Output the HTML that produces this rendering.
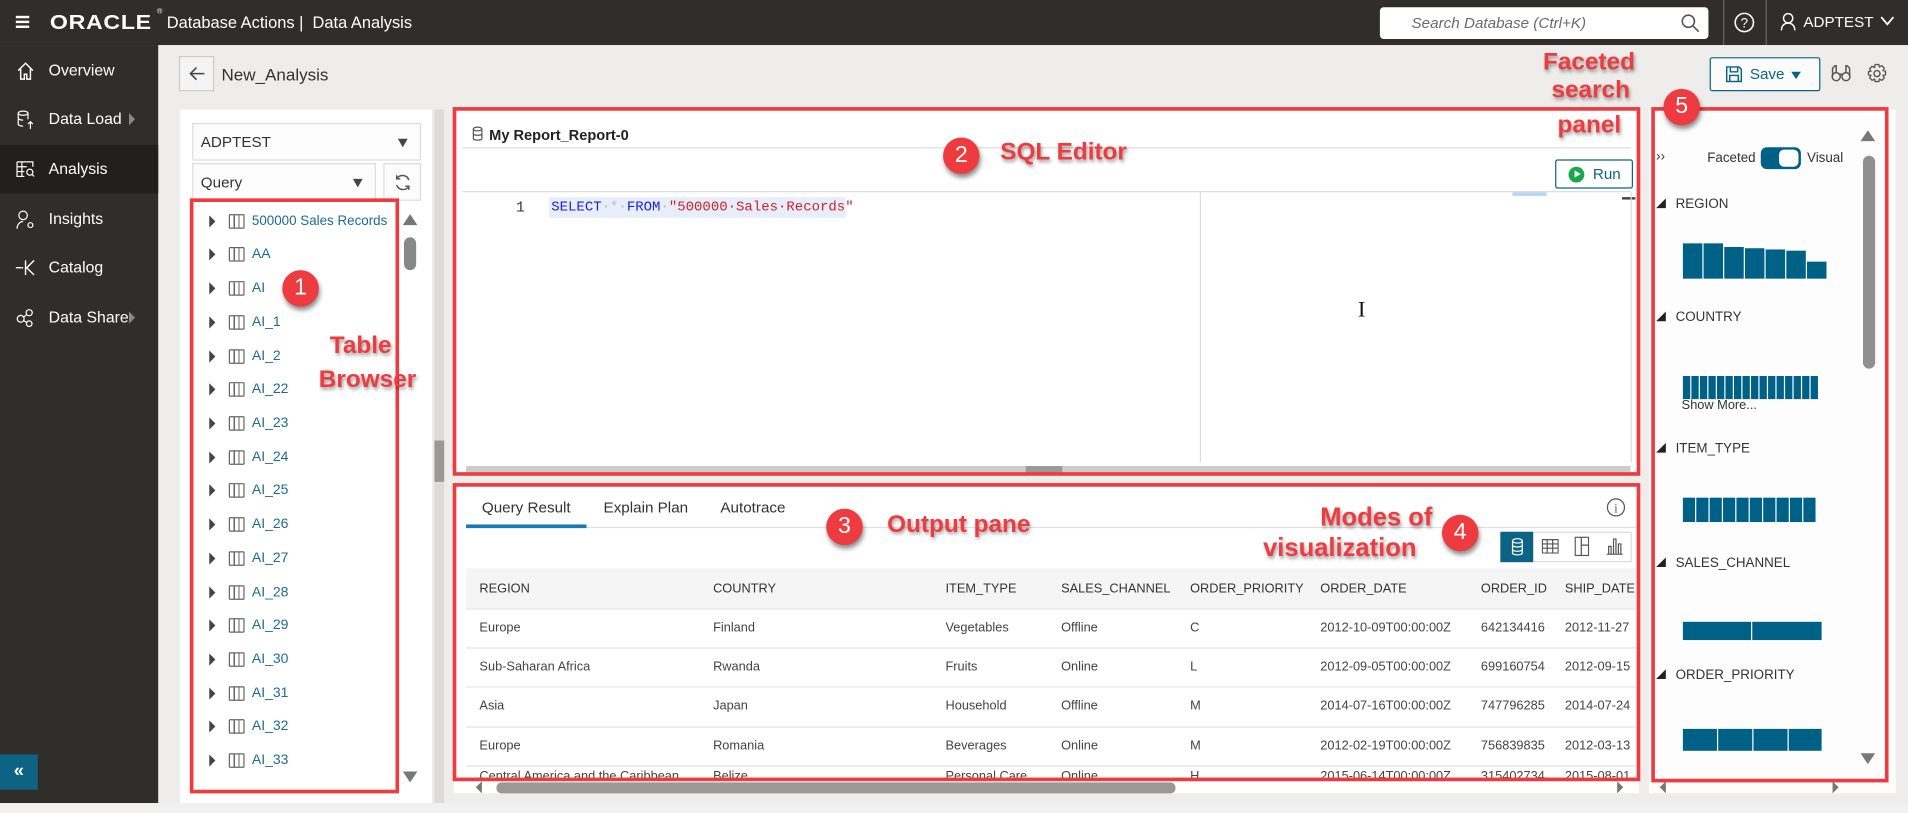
<!DOCTYPE html>
<html><head><meta charset="utf-8">
<style>
*{box-sizing:border-box;margin:0;padding:0}
html,body{width:1908px;height:813px;overflow:hidden;background:#f1f1f1;font-family:"Liberation Sans",Arial,sans-serif}
#w{position:absolute;left:0;top:0;width:1568px;height:668px;transform:scale(1.21684);transform-origin:0 0;background:#eeedeb}
.a{position:absolute}
.top{left:0;top:0;width:1568px;height:37px;background:#312d2a;color:#fff}
.nav{left:0;top:37px;width:130px;height:623px;background:#312d2a}
.nav .it{position:absolute;left:0;width:130px;height:40px;color:#fff;font-size:13px;line-height:40px;padding-left:40px}
.nav svg{position:absolute;left:13px;top:12px}
.panel{background:#fff}
.tr{position:absolute;left:172px;font-size:11.5px;color:#1d6a96;height:16px;line-height:16px}
.tr:before{content:"";position:absolute;left:0;top:3px;border-left:5px solid #444;border-top:5px solid transparent;border-bottom:5px solid transparent}
.tr i{position:absolute;left:16px;top:2px;width:13px;height:12px;border:1px solid #666;border-radius:1px;background:linear-gradient(90deg,transparent 3px,#666 3px,#666 4px,transparent 4px,transparent 7px,#666 7px,#666 8px,transparent 8px)}
.tr span{margin-left:35px}
.red{position:absolute;border:3px solid #ee3b3f}
.num{position:absolute;width:30px;height:30px;border-radius:50%;background:#ee3b3f;color:#fff;font-size:19px;text-align:center;line-height:30px;box-shadow:1px 3px 4px rgba(0,0,0,.45)}
.lab{position:absolute;color:#ee3b3f;font-weight:bold;font-size:20px;text-shadow:1px 2px 3px rgba(0,0,0,.4);white-space:nowrap}
.th{position:absolute;top:478px;font-size:10.5px;color:#333}
.td{position:absolute;font-size:10.5px;color:#444}
.rl{position:absolute;left:383px;width:962px;height:1px;background:#e3e3e3}
.fl{position:absolute;left:1377px;font-size:11px;color:#333}
.fl:before{content:"";position:absolute;left:-16px;top:1px;border-right:8px solid #222;border-top:8px solid transparent}
.bars{position:absolute;left:1383px;display:flex;align-items:flex-end;gap:1px}
.bars b{background:#006186;display:block}
</style></head><body><div id="w">
<div class="a top">
 <div class="a" style="left:13px;top:13px;width:11px;height:2px;background:#fff;box-shadow:0 4px #fff,0 8px #fff"></div>
 <div class="a" style="left:41px;top:9px;font-size:17px;font-weight:bold;letter-spacing:0.5px;transform:scaleX(1.12);transform-origin:0 0">ORACLE</div>
 <div class="a" style="left:129px;top:7px;font-size:6px">®</div>
 <div class="a" style="left:137px;top:11px;font-size:13.5px">Database Actions |&nbsp; Data Analysis</div>
 <div class="a" style="left:1134px;top:6px;width:270px;height:26px;background:#fff;border-radius:3px">
  <div class="a" style="left:26px;top:6px;font-size:12.5px;font-style:italic;color:#6b6b6b">Search Database (Ctrl+K)</div>
  <svg class="a" style="left:247px;top:5px" width="16" height="16" viewBox="0 0 16 16"><circle cx="6.5" cy="6.5" r="5" fill="none" stroke="#555" stroke-width="1.3"/><path d="M10 10l5 5" stroke="#555" stroke-width="1.3"/></svg>
 </div>
 <div class="a" style="left:1416px;top:0;width:1px;height:37px;background:#666"></div>
 <svg class="a" style="left:1425px;top:10px" width="17" height="17" viewBox="0 0 17 17"><circle cx="8.5" cy="8.5" r="7.5" fill="none" stroke="#fff" stroke-width="1.3"/><text x="8.5" y="12.5" font-size="11" fill="#fff" text-anchor="middle" font-family="Liberation Sans">?</text></svg>
 <div class="a" style="left:1451px;top:0;width:1px;height:37px;background:#666"></div>
 <svg class="a" style="left:1463px;top:10px" width="13" height="16" viewBox="0 0 13 16"><circle cx="6.5" cy="5" r="3.8" fill="none" stroke="#fff" stroke-width="1.2"/><path d="M1 15c0-4 2.5-6 5.5-6s5.5 2 5.5 6" fill="none" stroke="#fff" stroke-width="1.2"/></svg>
 <div class="a" style="left:1482px;top:11px;font-size:12.5px">ADPTEST</div>
 <svg class="a" style="left:1545px;top:13px" width="12" height="9" viewBox="0 0 12 9"><path d="M1 1l5 6 5-6" fill="none" stroke="#fff" stroke-width="1.5"/></svg>
</div>
<div class="a nav">
 <div class="it" style="top:1px"><svg width="16" height="16" viewBox="0 0 16 16"><path d="M2 8L8 2l6 6M4 6.5V15h3v-4h2v4h3V6.5" fill="none" stroke="#fff" stroke-width="1.2"/></svg>Overview</div>
 <div class="it" style="top:41px"><svg width="16" height="16" viewBox="0 0 16 16"><ellipse cx="6" cy="3" rx="4" ry="1.7" fill="none" stroke="#fff"/><path d="M2 3v9c0 1 2 1.7 4 1.7M10 3v5M2 7c0 1 2 1.7 4 1.7M12 10v6M10 12l2-2 2 2" fill="none" stroke="#fff"/></svg>Data Load<span style="position:absolute;left:106px;top:15px;border-left:5px solid #888;border-top:5px solid transparent;border-bottom:5px solid transparent"></span></div>
 <div class="it" style="top:82px;background:#221f1d"><svg width="16" height="16" viewBox="0 0 16 16"><path d="M1 2h13v4M1 2v12h6M1 6h8M1 10h6M5 2v12" fill="none" stroke="#fff"/><circle cx="11.5" cy="10.5" r="2.5" fill="none" stroke="#fff"/><path d="M13.3 12.3L15 14" stroke="#fff"/></svg>Analysis</div>
 <div class="it" style="top:123px"><svg width="16" height="17" viewBox="0 0 16 17"><circle cx="6" cy="5" r="3.5" fill="none" stroke="#fff"/><path d="M1 16c0-3 2-6 5-6" fill="none" stroke="#fff"/><circle cx="12" cy="13" r="2" fill="none" stroke="#fff"/></svg>Insights</div>
 <div class="it" style="top:163px"><svg width="16" height="16" viewBox="0 0 16 16"><path d="M0 8h6M8 2v12M15 2L9 8l6 6" fill="none" stroke="#fff" stroke-width="1.2"/></svg>Catalog</div>
 <div class="it" style="top:204px"><svg width="16" height="16" viewBox="0 0 16 16"><circle cx="4" cy="9" r="2.8" fill="none" stroke="#fff"/><circle cx="11" cy="4" r="2.5" fill="none" stroke="#fff"/><circle cx="11" cy="13" r="2.3" fill="none" stroke="#fff"/><path d="M6.5 7.5l2.5-2M6.5 10.5l2.5 1.5" stroke="#fff"/></svg>Data Share<span style="position:absolute;left:106px;top:15px;border-left:5px solid #888;border-top:5px solid transparent;border-bottom:5px solid transparent"></span></div>
 <div class="a" style="left:0;top:583px;width:31px;height:29px;background:#0d6384;color:#fff;font-size:15px;text-align:center;line-height:27px;font-weight:bold">«</div>
</div>
<div class="a" style="left:0;top:660px;width:1568px;height:8px;background:#f1f1f1"></div>
<div class="a" style="left:147px;top:46px;width:29px;height:29px;border:1px solid #ccc;background:#f4f4f4"><svg style="position:absolute;left:7px;top:7px" width="14" height="13" viewBox="0 0 14 13"><path d="M13 6.5H1.5M6.5 1.5l-5 5 5 5" fill="none" stroke="#444" stroke-width="1.3"/></svg></div>
<div class="a" style="left:182px;top:53px;font-size:14px;color:#333">New_Analysis</div>
<div class="a" style="left:1405px;top:47px;width:91px;height:28px;border:1px solid #0d6384;background:#fbfbfb;border-radius:2px">
 <svg class="a" style="left:12px;top:6px" width="14" height="14" viewBox="0 0 14 14"><path d="M1 1h10l2 2v10H1z M4 1v4h6V1 M3.5 13V8h7v5" fill="none" stroke="#0d6384" stroke-width="1.2"/></svg>
 <div class="a" style="left:32px;top:6px;font-size:12.5px;color:#0d6384">Save</div>
 <div class="a" style="left:66px;top:11px;border-top:6px solid #0d6384;border-left:4px solid transparent;border-right:4px solid transparent"></div>
</div>
<svg class="a" style="left:1505px;top:53px" width="16" height="15" viewBox="0 0 16 15"><circle cx="4" cy="10" r="3.3" fill="none" stroke="#555" stroke-width="1.2"/><circle cx="12" cy="10" r="3.3" fill="none" stroke="#555" stroke-width="1.2"/><path d="M1 10V3l2-2h1v6M15 10V3l-2-2h-1v6M7 8h2" fill="none" stroke="#555" stroke-width="1.2"/></svg>
<svg class="a" style="left:1534px;top:52px" width="17" height="17" viewBox="0 0 17 17"><circle cx="8.5" cy="8.5" r="2.5" fill="none" stroke="#555" stroke-width="1.2"/><path d="M7 1h3l.5 2 2-1 2 2-1 2 2 .5v3l-2 .5 1 2-2 2-2-1-.5 2H7l-.5-2-2 1-2-2 1-2-2-.5V7l2-.5-1-2 2-2 2 1z" fill="none" stroke="#555" stroke-width="1.1"/></svg>
<div class="a panel" style="left:148px;top:90px;width:207px;height:570px"></div>
<div class="a" style="left:158px;top:101px;width:188px;height:31px;border:1px solid #ddd;background:#fcfcfc;font-size:12.5px;color:#333;padding:8px 0 0 6px">ADPTEST<span style="position:absolute;left:168px;top:12px;border-top:7px solid #444;border-left:4px solid transparent;border-right:4px solid transparent"></span></div>
<div class="a" style="left:158px;top:134px;width:151px;height:31px;border:1px solid #ddd;background:#fcfcfc;font-size:12.5px;color:#333;padding:8px 0 0 6px">Query<span style="position:absolute;left:131px;top:12px;border-top:7px solid #444;border-left:4px solid transparent;border-right:4px solid transparent"></span></div>
<div class="a" style="left:315px;top:134px;width:31px;height:31px;border:1px solid #ddd;background:#fcfcfc"><svg style="position:absolute;left:7px;top:7px" width="16" height="16" viewBox="0 0 16 16"><path d="M13 6A5.5 5.5 0 0 0 3 5M3 10a5.5 5.5 0 0 0 10 1M3 2v3h3M13 14v-3h-3" fill="none" stroke="#555" stroke-width="1.2"/></svg></div>
<div class="tr" style="top:174px;font-size:11px"><i></i><span>500000 Sales Records</span></div>
<div class="tr" style="top:201px"><i></i><span>AA</span></div>
<div class="tr" style="top:229px"><i></i><span>AI</span></div>
<div class="tr" style="top:257px"><i></i><span>AI_1</span></div>
<div class="tr" style="top:285px"><i></i><span>AI_2</span></div>
<div class="tr" style="top:312px"><i></i><span>AI_22</span></div>
<div class="tr" style="top:340px"><i></i><span>AI_23</span></div>
<div class="tr" style="top:368px"><i></i><span>AI_24</span></div>
<div class="tr" style="top:395px"><i></i><span>AI_25</span></div>
<div class="tr" style="top:423px"><i></i><span>AI_26</span></div>
<div class="tr" style="top:451px"><i></i><span>AI_27</span></div>
<div class="tr" style="top:479px"><i></i><span>AI_28</span></div>
<div class="tr" style="top:506px"><i></i><span>AI_29</span></div>
<div class="tr" style="top:534px"><i></i><span>AI_30</span></div>
<div class="tr" style="top:562px"><i></i><span>AI_31</span></div>
<div class="tr" style="top:589px"><i></i><span>AI_32</span></div>
<div class="tr" style="top:617px"><i></i><span>AI_33</span></div>
<div class="tr" style="top:645px;height:4px;overflow:hidden"><i></i></div>
<div class="a" style="left:331px;top:176px;border-bottom:9px solid #777;border-left:6px solid transparent;border-right:6px solid transparent"></div>
<div class="a" style="left:332px;top:195px;width:10px;height:27px;background:#888;border-radius:5px"></div>
<div class="a" style="left:331px;top:634px;border-top:9px solid #777;border-left:6px solid transparent;border-right:6px solid transparent"></div>
<div class="a" style="left:357px;top:90px;width:8px;height:570px;background:#dcdcdc"></div>
<div class="a" style="left:357px;top:362px;width:8px;height:34px;background:#999"></div>
<div class="a panel" style="left:373px;top:90px;width:974px;height:300px"></div>
<svg class="a" style="left:388px;top:104px" width="9" height="12" viewBox="0 0 9 12"><ellipse cx="4.5" cy="2" rx="3.5" ry="1.5" fill="none" stroke="#555"/><path d="M1 2v8c0 1.5 7 1.5 7 0V2M1 6c0 1.5 7 1.5 7 0" fill="none" stroke="#555"/></svg>
<div class="a" style="left:402px;top:104px;font-size:12px;font-weight:bold;color:#222">My Report_Report-0</div>
<div class="a" style="left:380px;top:121px;width:960px;height:1px;background:#ddd"></div>
<div class="a" style="left:1278px;top:131px;width:64px;height:24px;border:1px solid #0d6384;border-radius:2px;background:#fff">
 <div class="a" style="left:10px;top:5px;width:13px;height:13px;border-radius:50%;background:#17a84b"></div>
 <div class="a" style="left:15px;top:8px;border-left:5px solid #fff;border-top:3.5px solid transparent;border-bottom:3.5px solid transparent"></div>
 <div class="a" style="left:30px;top:4px;font-size:12.5px;color:#0d6384">Run</div>
</div>
<div class="a" style="left:380px;top:157px;width:960px;height:1px;background:#ddd"></div>
<div class="a" style="left:424px;top:164px;font-size:12px;color:#333;font-family:'Liberation Mono',monospace">1</div>
<div class="a" style="left:451px;top:162px;height:17px;width:244px;background:#e7eef9;font-family:'Liberation Mono',monospace;font-size:11.5px;line-height:17px;padding-left:2px;white-space:pre"><span style="color:#1d1de0">SELECT</span><span style="color:#bbb">·*·</span><span style="color:#1d1de0">FROM</span><span style="color:#bbb">·</span><span style="color:#d0202a">"500000·Sales·Records"</span></div>
<div class="a" style="left:986px;top:158px;width:1px;height:222px;background:#ddd"></div>
<div class="a" style="left:1243px;top:158px;width:28px;height:3px;background:#b7d6f3"></div>
<div class="a" style="left:1333px;top:162px;width:11px;height:2px;background:#444"></div>
<div class="a" style="left:1340px;top:158px;width:1px;height:222px;background:#ddd"></div>
<div class="a" style="left:1116px;top:244px;font-size:18px;color:#111;font-family:'Liberation Serif',serif">I</div>
<div class="a" style="left:383px;top:383px;width:957px;height:5px;background:#ccc"></div>
<div class="a" style="left:843px;top:383px;width:30px;height:7px;background:#999"></div>
<div class="a panel" style="left:373px;top:398px;width:974px;height:254px"></div>
<div class="a" style="left:396px;top:410px;font-size:12.5px;color:#333">Query Result</div>
<div class="a" style="left:496px;top:410px;font-size:12.5px;color:#333">Explain Plan</div>
<div class="a" style="left:592px;top:410px;font-size:12.5px;color:#333">Autotrace</div>
<div class="a" style="left:383px;top:433px;width:962px;height:1px;background:#e0e0e0"></div>
<div class="a" style="left:383px;top:431px;width:99px;height:3px;background:#1779b7"></div>
<svg class="a" style="left:1320px;top:409px" width="16" height="16" viewBox="0 0 16 16"><circle cx="8" cy="8" r="7" fill="none" stroke="#555"/><text x="8" y="12" font-size="10" text-anchor="middle" fill="#555" font-family="Liberation Serif">i</text></svg>
<div class="a" style="left:1233px;top:437px;width:108px;height:25px;border:1px solid #ddd;background:#fff"></div>
<div class="a" style="left:1233px;top:437px;width:27px;height:25px;background:#0d6384"><svg style="position:absolute;left:9px;top:5px" width="10" height="15" viewBox="0 0 10 15"><ellipse cx="5" cy="2.5" rx="4" ry="1.8" fill="none" stroke="#fff"/><path d="M1 2.5v10c0 2 8 2 8 0v-10M1 6c0 2 8 2 8 0M1 9.5c0 2 8 2 8 0" fill="none" stroke="#fff"/></svg></div>
<svg class="a" style="left:1267px;top:443px" width="14" height="12" viewBox="0 0 14 12"><path d="M.5.5h13v11H.5zM.5 4h13M.5 7.5h13M4.5.5v11M9 .5v11" fill="none" stroke="#555"/></svg>
<svg class="a" style="left:1294px;top:441px" width="12" height="16" viewBox="0 0 12 16"><path d="M.5.5h11v15H.5zM5.5.5v15M5.5 7h6" fill="none" stroke="#555"/></svg>
<svg class="a" style="left:1320px;top:441px" width="14" height="15" viewBox="0 0 14 15"><path d="M.5 14.5h13M2 14V8h2v6M6 14V2h2v12M10 14V6h2v8" fill="none" stroke="#555"/></svg>
<div class="a" style="left:383px;top:467px;width:962px;height:33px;background:#f5f5f5"></div>
<div class="th" style="left:394px">REGION</div><div class="th" style="left:586px">COUNTRY</div><div class="th" style="left:777px">ITEM_TYPE</div><div class="th" style="left:872px">SALES_CHANNEL</div><div class="th" style="left:978px">ORDER_PRIORITY</div><div class="th" style="left:1085px">ORDER_DATE</div><div class="th" style="left:1217px">ORDER_ID</div><div class="th" style="left:1286px;width:58px;overflow:hidden;white-space:nowrap">SHIP_DATE</div>
<div class="rl" style="top:500px"></div><div class="rl" style="top:532px"></div><div class="rl" style="top:564px"></div><div class="rl" style="top:597px"></div><div class="rl" style="top:629px"></div>
<div style="position:absolute;left:0;top:0;width:1345px;height:641px;overflow:hidden">
<div class="td" style="left:394px;top:510px">Europe</div><div class="td" style="left:586px;top:510px">Finland</div><div class="td" style="left:777px;top:510px">Vegetables</div><div class="td" style="left:872px;top:510px">Offline</div><div class="td" style="left:978px;top:510px">C</div><div class="td" style="left:1085px;top:510px">2012-10-09T00:00:00Z</div><div class="td" style="left:1217px;top:510px">642134416</div><div class="td" style="left:1286px;top:510px">2012-11-27</div>
<div class="td" style="left:394px;top:542px">Sub-Saharan Africa</div><div class="td" style="left:586px;top:542px">Rwanda</div><div class="td" style="left:777px;top:542px">Fruits</div><div class="td" style="left:872px;top:542px">Online</div><div class="td" style="left:978px;top:542px">L</div><div class="td" style="left:1085px;top:542px">2012-09-05T00:00:00Z</div><div class="td" style="left:1217px;top:542px">699160754</div><div class="td" style="left:1286px;top:542px">2012-09-15</div>
<div class="td" style="left:394px;top:574px">Asia</div><div class="td" style="left:586px;top:574px">Japan</div><div class="td" style="left:777px;top:574px">Household</div><div class="td" style="left:872px;top:574px">Offline</div><div class="td" style="left:978px;top:574px">M</div><div class="td" style="left:1085px;top:574px">2014-07-16T00:00:00Z</div><div class="td" style="left:1217px;top:574px">747796285</div><div class="td" style="left:1286px;top:574px">2014-07-24</div>
<div class="td" style="left:394px;top:607px">Europe</div><div class="td" style="left:586px;top:607px">Romania</div><div class="td" style="left:777px;top:607px">Beverages</div><div class="td" style="left:872px;top:607px">Online</div><div class="td" style="left:978px;top:607px">M</div><div class="td" style="left:1085px;top:607px">2012-02-19T00:00:00Z</div><div class="td" style="left:1217px;top:607px">756839835</div><div class="td" style="left:1286px;top:607px">2012-03-13</div>
<div class="td" style="left:394px;top:632px">Central America and the Caribbean</div><div class="td" style="left:586px;top:632px">Belize</div><div class="td" style="left:777px;top:632px">Personal Care</div><div class="td" style="left:872px;top:632px">Online</div><div class="td" style="left:978px;top:632px">H</div><div class="td" style="left:1085px;top:632px">2015-06-14T00:00:00Z</div><div class="td" style="left:1217px;top:632px">315402734</div><div class="td" style="left:1286px;top:632px">2015-08-01</div>
</div>
<div class="a" style="left:391px;top:642px;border-right:5px solid #777;border-top:5px solid transparent;border-bottom:5px solid transparent"></div>
<div class="a" style="left:408px;top:643px;width:558px;height:9px;background:#999;border-radius:4px"></div>
<div class="a" style="left:1329px;top:642px;border-left:5px solid #777;border-top:5px solid transparent;border-bottom:5px solid transparent"></div>
<div class="a panel" style="left:1355px;top:90px;width:203px;height:562px;background:#fdfdfd"></div>
<div class="a" style="left:1361px;top:123px;font-size:11px;color:#333">››</div>
<div class="a" style="left:1403px;top:124px;font-size:11px;color:#333">Faceted</div>
<div class="a" style="left:1447px;top:121px;width:33px;height:18px;border-radius:5px;background:#006186"><div class="a" style="left:15px;top:2px;width:16px;height:14px;border-radius:4px;background:#fff"></div></div>
<div class="a" style="left:1485px;top:124px;font-size:11px;color:#333">Visual</div>
<div class="a" style="left:1529px;top:107px;border-bottom:9px solid #777;border-left:6px solid transparent;border-right:6px solid transparent"></div>
<div class="a" style="left:1531px;top:128px;width:10px;height:175px;background:#8f8f8f;border-radius:5px"></div>
<div class="a" style="left:1529px;top:619px;border-top:9px solid #777;border-left:6px solid transparent;border-right:6px solid transparent"></div>
<div class="fl" style="top:162px">REGION</div>
<div class="bars" style="top:200px;height:29px"><b style="width:16px;height:29px"></b><b style="width:16px;height:29px"></b><b style="width:16px;height:26px"></b><b style="width:16px;height:25px"></b><b style="width:16px;height:24px"></b><b style="width:16px;height:23px"></b><b style="width:16px;height:14px"></b></div>
<div class="fl" style="top:255px">COUNTRY</div>
<div class="bars" style="top:309px;height:19px;gap:1px"><b style="width:6px;height:19px"></b><b style="width:6px;height:19px"></b><b style="width:6px;height:19px"></b><b style="width:6px;height:19px"></b><b style="width:6px;height:19px"></b><b style="width:6px;height:19px"></b><b style="width:6px;height:19px"></b><b style="width:6px;height:19px"></b><b style="width:6px;height:19px"></b><b style="width:6px;height:19px"></b><b style="width:6px;height:19px"></b><b style="width:6px;height:19px"></b><b style="width:6px;height:19px"></b><b style="width:6px;height:19px"></b><b style="width:6px;height:19px"></b><b style="width:6px;height:19px"></b></div>
<div class="a" style="left:1382px;top:327px;font-size:10.5px;color:#333">Show More...</div>
<div class="fl" style="top:363px">ITEM_TYPE</div>
<div class="bars" style="top:409px;height:20px"><b style="width:10px;height:20px"></b><b style="width:10px;height:20px"></b><b style="width:10px;height:20px"></b><b style="width:10px;height:20px"></b><b style="width:10px;height:20px"></b><b style="width:10px;height:20px"></b><b style="width:10px;height:20px"></b><b style="width:10px;height:20px"></b><b style="width:10px;height:20px"></b><b style="width:10px;height:20px"></b></div>
<div class="fl" style="top:457px">SALES_CHANNEL</div>
<div class="bars" style="top:511px;height:15px"><b style="width:56px;height:15px"></b><b style="width:57px;height:15px"></b></div>
<div class="fl" style="top:549px">ORDER_PRIORITY</div>
<div class="bars" style="top:599px;height:18px"><b style="width:28px;height:18px"></b><b style="width:28px;height:18px"></b><b style="width:28px;height:18px"></b><b style="width:27px;height:18px"></b></div>
<div class="a" style="left:1364px;top:642px;border-right:5px solid #777;border-top:5px solid transparent;border-bottom:5px solid transparent"></div>
<div class="a" style="left:1506px;top:642px;border-left:5px solid #777;border-top:5px solid transparent;border-bottom:5px solid transparent"></div>
<div class="red" style="left:156px;top:163px;width:172px;height:489px"></div>
<div class="red" style="left:372px;top:88px;width:976px;height:303px"></div>
<div class="red" style="left:372px;top:397px;width:976px;height:245px"></div>
<div class="red" style="left:1357px;top:88px;width:195px;height:555px"></div>
<div class="num" style="left:232px;top:222px">1</div>
<div class="num" style="left:775px;top:113px">2</div>
<div class="num" style="left:679px;top:418px">3</div>
<div class="num" style="left:1185px;top:423px">4</div>
<div class="num" style="left:1367px;top:73px">5</div>
<div class="lab" style="left:271px;top:273px">Table</div>
<div class="lab" style="left:262px;top:301px">Browser</div>
<div class="lab" style="left:822px;top:114px">SQL Editor</div>
<div class="lab" style="left:729px;top:420px">Output pane</div>
<div class="lab" style="left:1085px;top:414px;font-size:21px">Modes of</div>
<div class="lab" style="left:1038px;top:439px;font-size:21px">visualization</div>
<div class="lab" style="left:1268px;top:40px">Faceted</div>
<div class="lab" style="left:1275px;top:63px">search</div>
<div class="lab" style="left:1280px;top:92px">panel</div>
</div></body></html>
